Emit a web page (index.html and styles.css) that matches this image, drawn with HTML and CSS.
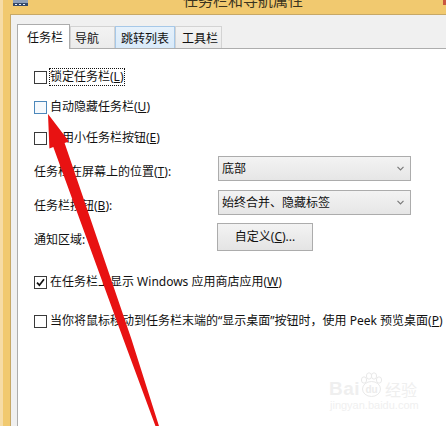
FILE: index.html
```html
<!DOCTYPE html>
<html lang="zh-CN">
<head>
<meta charset="utf-8">
<title>任务栏和导航属性</title>
<link rel="stylesheet" href="styles.css">
</head>
<body>
<div class="window">
  <div class="titlebar">
    <svg class="app-icon" width="15" height="6" viewBox="0 0 15 6">
      <rect x="0" y="0" width="15" height="6" fill="#8fa0b8"/>
      <rect x="0" y="3" width="15" height="3" fill="#34496a"/>
      <rect x="2" y="4" width="2" height="1" fill="#e8eef6"/>
      <rect x="6" y="4" width="2" height="1" fill="#e8eef6"/>
      <rect x="10" y="4" width="2" height="1" fill="#e8eef6"/>
    </svg>
    <span class="title">任务栏和导航属性</span>
    <span class="close"></span>
  </div>
  <div class="client">
    <div class="tabs">
      <div class="tab selected t1">任务栏</div>
      <div class="tab t2">导航</div>
      <div class="tab hover t3">跳转列表</div>
      <div class="tab t4">工具栏</div>
    </div>
    <div class="panel">
      <div class="check-row r1">
        <span class="box"></span>
        <span class="label focus">锁定任务栏(<u>L</u>)</span>
      </div>
      <div class="check-row r2">
        <span class="box hot"></span>
        <span class="label">自动隐藏任务栏(<u>U</u>)</span>
      </div>
      <div class="check-row r3">
        <span class="box"></span>
        <span class="label">使用小任务栏按钮(<u>E</u>)</span>
      </div>

      <div class="setting-row s1">
        <span class="field-label">任务栏在屏幕上的位置(<u>T</u>):</span>
        <div class="select">
          <span>底部</span>
          <svg class="chev" width="7" height="5" viewBox="0 0 7 5"><path d="M0.5 0.8 L3.5 3.8 L6.5 0.8" fill="none" stroke="#7a7a7a" stroke-width="1.2"/></svg>
        </div>
      </div>
      <div class="setting-row s2">
        <span class="field-label">任务栏按钮(<u>B</u>):</span>
        <div class="select">
          <span>始终合并、隐藏标签</span>
          <svg class="chev" width="7" height="5" viewBox="0 0 7 5"><path d="M0.5 0.8 L3.5 3.8 L6.5 0.8" fill="none" stroke="#7a7a7a" stroke-width="1.2"/></svg>
        </div>
      </div>
      <div class="setting-row s3">
        <span class="field-label">通知区域:</span>
        <div class="button">自定义(<u>C</u>)...</div>
      </div>

      <div class="check-row r4">
        <span class="box">
          <svg width="11" height="11" viewBox="0 0 11 11"><path d="M2 5.6 L4.4 8.2 L9 2.2" fill="none" stroke="#111" stroke-width="1.7"/></svg>
        </span>
        <span class="label">在任务栏上显示 Windows 应用商店应用(<u>W</u>)</span>
      </div>
      <div class="check-row r5">
        <span class="box"></span>
        <span class="label">当你将鼠标移动到任务栏末端的“显示桌面”按钮时，使用 Peek 预览桌面(<u>P</u>)</span>
      </div>
    </div>
  </div>
</div>

<svg class="arrow" width="446" height="426" viewBox="0 0 446 426">
  <polygon fill="#e81212" points="48,114 69,141.6 64.6,143.1 131.4,339 159.6,428 156.4,428.6 124.2,341.6 53.3,147.1 49.4,148.6"/>
</svg>

<div class="watermark">
  <div class="wm-top">
    <span class="wm-bai">Bai</span>
    <svg class="wm-paw" width="26" height="26" viewBox="0 0 26 26">
      <ellipse cx="6" cy="8" rx="2.6" ry="3.2" fill="none" stroke="#e9e9e9"/>
      <ellipse cx="11" cy="4" rx="2.6" ry="3.2" fill="none" stroke="#e9e9e9"/>
      <ellipse cx="16" cy="4" rx="2.6" ry="3.2" fill="none" stroke="#e9e9e9"/>
      <ellipse cx="21" cy="8" rx="2.6" ry="3.2" fill="none" stroke="#e9e9e9"/>
      <ellipse cx="13.5" cy="17" rx="9" ry="7.5" fill="none" stroke="#e9e9e9"/>
      <text x="13.5" y="21" text-anchor="middle" class="wm-du">du</text>
    </svg>
    <span class="wm-jy">经验</span>
  </div>
  <div class="wm-url">jingyan.baidu.com</div>
</div>
</body>
</html>
```

FILE: styles.css
```css
html, body {
  margin: 0;
  padding: 0;
}

body {
  width: 446px;
  height: 426px;
  overflow: hidden;
  position: relative;
  background: #ffffff;
  font-family: "Noto Sans", "Noto Sans CJK SC", sans-serif;
  font-size: 12px;
  line-height: 16px;
  color: #111111;
}

.window {
  display: flex;
  flex-direction: column;
  height: 426px;
  width: 446px;
  background: #f1c96f;
  border-left: 3px solid #f6dca6;
  box-sizing: border-box;
}

.titlebar {
  height: 14px;
  flex: none;
  display: flex;
  align-items: flex-start;
  overflow: hidden;
}

.app-icon {
  margin-left: 10px;
  flex: none;
}

.title {
  margin-left: 155px;
  margin-top: -8px;
  font-family: "Noto Sans CJK SC", sans-serif;
  font-size: 15px;
  line-height: 15px;
  color: #3a3320;
}

.close {
  margin-left: auto;
  width: 3px;
  height: 5px;
  background: #c9573e;
}

.client {
  flex: 1;
  display: flex;
  flex-direction: column;
  margin-left: 7px;
  border-left: 1px solid #c7a866;
  border-top: 1px solid #c7a866;
  background: #f0f0f0;
  padding: 9px 0 0 6px;
}

.tabs {
  display: flex;
  align-items: flex-end;
  height: 24px;
  flex: none;
}

.tab {
  box-sizing: border-box;
  height: 22px;
  border: 1px solid #d3d3d3;
  border-bottom: none;
  background: linear-gradient(#f3f3f3, #ebebeb);
  display: flex;
  align-items: center;
  font-family: "Noto Sans CJK SC", sans-serif;
  line-height: 16px;
  color: #111;
}

.tab.selected {
  height: 25px;
  margin-bottom: -1px;
  background: #ffffff;
  border-color: #acacac;
  position: relative;
  z-index: 1;
}

.tab.hover {
  background: linear-gradient(#e6f1fb, #d9eaf9);
  border-color: #a6c8e8;
}

.t1 { width: 53px; padding-left: 9px; }
.t2 { width: 45px; padding-left: 4px; }
.t3 { width: 60px; padding-left: 5px; }
.t4 { width: 47px; padding-left: 6px; }

.panel {
  flex: 1;
  background: #ffffff;
  border-left: 1px solid #adadad;
  border-top: 1px solid #adadad;
  padding: 19px 0 0 16px;
  overflow: hidden;
}

.check-row {
  display: flex;
  align-items: center;
  height: 18px;
  white-space: nowrap;
}

.r2 { margin-top: 12px; }
.r3 { margin-top: 13px; }
.r4 { margin-top: 22px; }
.r5 { margin-top: 21px; }

.box {
  box-sizing: border-box;
  width: 13px;
  height: 13px;
  border: 1px solid #3a3a3a;
  background: #ffffff;
  margin-right: 2px;
  margin-top: 1px;
  flex: none;
  display: flex;
  align-items: center;
  justify-content: center;
}

.box.hot {
  border-color: #4c88bb;
  background: #f5f9fd;
}

.label {
  border: 1px solid transparent;
  line-height: 16px;
}

.label.focus {
  border: 1px dotted #111;
}

.setting-row {
  display: flex;
  align-items: center;
}

.s1 { margin-top: 9px; }
.s2 { margin-top: 9px; }
.s3 { margin-top: 8px; }

.field-label {
  width: 184px;
  flex: none;
  padding-top: 6px;
}

.select {
  box-sizing: border-box;
  width: 193px;
  height: 25px;
  border: 1px solid #acacac;
  background: linear-gradient(#f3f3f3, #e6e6e6);
  display: flex;
  align-items: center;
  justify-content: space-between;
  padding: 0 6px 0 3px;
}

.chev {
  flex: none;
}

.button {
  box-sizing: border-box;
  width: 96px;
  height: 28px;
  border: 1px solid #acacac;
  background: linear-gradient(#f3f3f3, #e4e4e4);
  display: flex;
  align-items: center;
  justify-content: center;
  margin-left: -1px;
}

.arrow {
  position: absolute;
  left: 0;
  top: 0;
  pointer-events: none;
}

.watermark {
  position: absolute;
  left: 329px;
  top: 370px;
  color: #efefef;
  pointer-events: none;
}

.wm-top {
  display: flex;
  align-items: flex-end;
  height: 28px;
}

.wm-bai {
  font-family: "Liberation Sans", sans-serif;
  font-weight: bold;
  font-size: 19px;
  line-height: 19px;
  letter-spacing: 0.5px;
}

.wm-paw {
  margin-left: -2px;
}

.wm-du {
  font-family: "Liberation Sans", sans-serif;
  font-size: 10px;
  font-weight: bold;
  fill: #ececec;
}

.wm-jy {
  font-family: "Noto Sans CJK SC", sans-serif;
  font-size: 16px;
  line-height: 18px;
  margin-left: 1px;
}

.wm-url {
  font-family: "Liberation Sans", sans-serif;
  font-size: 11px;
  line-height: 14px;
  margin-left: 1px;
  color: #f0f0f0;
}
```
